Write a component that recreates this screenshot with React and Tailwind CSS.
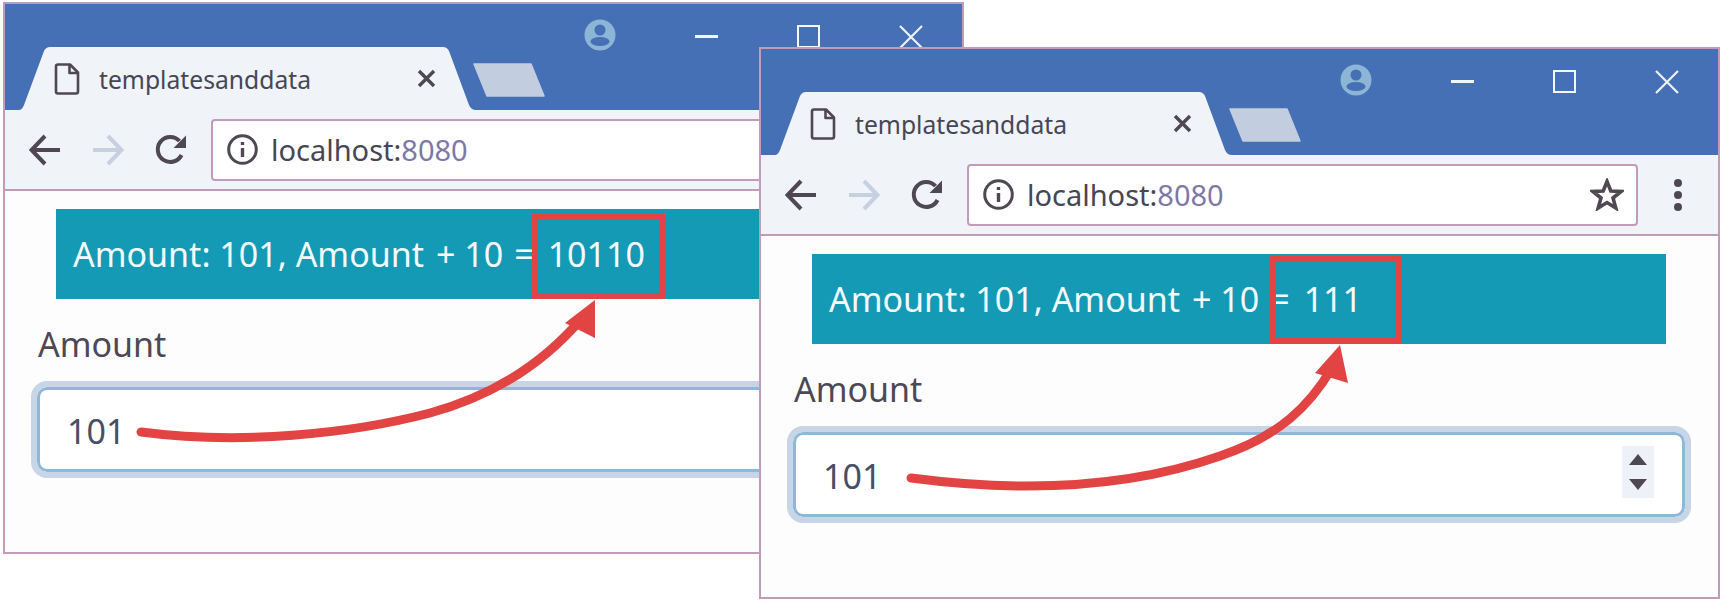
const DARK = "#4f4852";

function BrowserWindow({ className, result }) {
  return (
    <div className={`absolute flex h-[552px] w-[961px] flex-col overflow-hidden border-2 border-[#c29bbb] bg-[#fdfdfe] font-['Noto_Sans',sans-serif] ${className}`}>
      <div className="flex h-[106px] shrink-0 items-start bg-[#4570b5]">
        <div className="relative ml-[12px] mt-[43px] flex h-[63px] w-[459px] shrink-0 items-center">
          <svg className="absolute inset-0" width="459" height="63" viewBox="0 0 459 63">
            <path d="M2 63 Q5 63 7 58 L27 4 Q29 0 33 0 L426 0 Q430 0 432 4 L452 58 Q454 63 459 63 Z" fill="#f0f3f8" />
          </svg>
          <svg className="relative ml-[37px] shrink-0" width="26" height="32" viewBox="0 0 26 32" fill="none" stroke={DARK} strokeWidth="2.6" strokeLinejoin="round">
            <path d="M2 3.5 Q2 1.5 4 1.5 L16 1.5 L24 9.5 L24 28.5 Q24 30.5 22 30.5 L4 30.5 Q2 30.5 2 28.5 Z" />
            <path d="M15.5 1.5 L15.5 10 L24 10" />
          </svg>
          <span className="relative ml-[19px] mt-[2px] text-[24.7px] leading-[32px] text-[#474655]">templatesanddata</span>
          <svg className="relative ml-[106px] shrink-0" width="19" height="19" viewBox="0 0 19 19" stroke={DARK} strokeWidth="3.4">
            <path d="M2 2 L17 17 M17 2 L2 17" />
          </svg>
        </div>
        <svg className="ml-[-4px] mt-[59px] shrink-0" width="73" height="34" viewBox="0 0 73 34">
          <path d="M2 1 L59 1 L72 33 L15 33 Z" fill="#c3cde0" stroke="#c3cde0" strokeWidth="1.5" strokeLinejoin="round" />
        </svg>
        <svg className="ml-[39px] mt-[15px] shrink-0" width="32" height="32" viewBox="0 0 32 32">
          <circle cx="16" cy="16" r="15.5" fill="#8db6d6" />
          <circle cx="16" cy="11" r="5.5" fill="#4570b5" />
          <ellipse cx="16" cy="22.5" rx="9.5" ry="4.5" fill="#4570b5" />
        </svg>
        <div className="ml-[79px] mt-[31px] h-[3px] w-[23px] shrink-0 bg-[#f2f6fb]" />
        <div className="ml-[79px] mt-[21px] h-[23px] w-[23px] shrink-0 border-2 border-[#f5f8fc]" />
        <svg className="ml-[79px] mt-[21px] shrink-0" width="24" height="24" viewBox="0 0 24 24" stroke="#eef3f9" strokeWidth="2.2">
          <path d="M1 1 L23 23 M23 1 L1 23" />
        </svg>
      </div>

      <div className="flex h-[81px] shrink-0 items-center border-b-2 border-[#c29bbb] bg-[#f0f3f8]">
        <svg className="ml-[24px] shrink-0" width="32" height="32" viewBox="0 0 32 32" fill="none" stroke={DARK} strokeWidth="4">
          <path d="M31 16 L3 16 M16 2 L2.5 16 L16 30" />
        </svg>
        <svg className="ml-[31px] shrink-0" width="32" height="32" viewBox="0 0 32 32" fill="none" stroke="#c6d0e2" strokeWidth="4">
          <path d="M1 16 L29 16 M16 2 L29.5 16 L16 30" />
        </svg>
        <svg className="ml-[31px] shrink-0" width="32" height="32" viewBox="0 0 32 32" fill="none">
          <path d="M26.5 21 A12.5 12.5 0 1 1 24.5 7" stroke={DARK} strokeWidth="4" />
          <path d="M31 1.5 L31 14 L18.5 14 Z" fill={DARK} />
        </svg>
        <div className="ml-[24px] flex h-[62px] w-[671px] shrink-0 items-center rounded-[4px] border-2 border-[#c29bbb] bg-white">
          <svg className="ml-[14px] shrink-0" width="31" height="31" viewBox="0 0 31 31" fill="none" stroke={DARK}>
            <circle cx="15.5" cy="15.5" r="13.8" strokeWidth="3" />
            <path d="M15.5 14 L15.5 23" strokeWidth="3.4" />
            <path d="M15.5 8 L15.5 11" strokeWidth="3.4" />
          </svg>
          <span className="ml-[13px] text-[29px] leading-[34px] text-[#474655]">
            localhost:<span className="text-[#7d78a6]">8080</span>
          </span>
          <svg className="ml-auto mr-[12px] shrink-0" width="34" height="33" viewBox="0 0 34 33" fill="none" stroke={DARK} strokeWidth="3.6" strokeLinejoin="miter">
            <path d="M17 3.5 L20.8 13 L31 13.5 L23 20 L25.8 30 L17 24.5 L8.2 30 L11 20 L3 13.5 L13.2 13 Z" />
          </svg>
        </div>
        <div className="ml-[36px] flex w-[8px] shrink-0 flex-col gap-[4px]">
          <div className="h-[8px] w-[8px] rounded-full bg-[#4f4852]" />
          <div className="h-[8px] w-[8px] rounded-full bg-[#4f4852]" />
          <div className="h-[8px] w-[8px] rounded-full bg-[#4f4852]" />
        </div>
      </div>

      <div className="flex flex-col pl-[32px] pt-[18px]">
        <div className="ml-[19px] flex h-[90px] w-[854px] items-center whitespace-pre bg-[#149ab4] pl-[17px] text-[34px] leading-[40px] text-[#f4fafc]">
          <span>Amount: 101, Amount</span>
          <span className="ml-[12px]">+ 10</span>
          <span className="ml-[11px]">=</span>
          <span className="ml-[14px]">{result}</span>
        </div>
        <div className="ml-[1px] mt-[25px] text-[34px] leading-[40px] text-[#4d4855]">Amount</div>
        <div className="mt-[23px] flex h-[85px] w-[892px] items-center rounded-[10px] border-[3px] border-[#8cb8da] bg-white pl-[27px] pr-[28px] outline-[6px] outline-[#c8d5e6]">
          <span className="mt-[2px] text-[34px] leading-[40px] text-[#474f66]">101</span>
          <div className="mb-[6px] ml-auto flex h-[52px] w-[32px] shrink-0 items-center justify-center bg-[#eef1f7]">
            <svg width="18" height="36" viewBox="0 0 18 36" fill="#4f4852">
              <path d="M9 0 L18 11 L0 11 Z" />
              <path d="M0 25 L18 25 L9 36 Z" />
            </svg>
          </div>
        </div>
      </div>
    </div>
  );
}

function Arrow({ className, width, height, viewBox, curve, head }) {
  return (
    <svg className={`absolute ${className}`} width={width} height={height} viewBox={viewBox} fill="none">
      <path d={curve} stroke="#e24444" strokeWidth="9" strokeLinecap="round" />
      <path d={head} fill="#e24444" />
    </svg>
  );
}

export default function App() {
  return (
    <div className="relative h-[603px] w-[1725px] overflow-hidden bg-white">
      <BrowserWindow className="left-[3px] top-[2px]" result="10110" />
      <div className="absolute left-[532px] top-[213px] h-[86px] w-[133px] border-[6px] border-[#e24444]" />
      <Arrow
        className="left-0 top-0"
        width="963"
        height="603"
        viewBox="0 0 963 603"
        curve="M141 432 C 240 445, 350 434, 430 413 C 510 391, 555 350, 582 318"
        head="M595 300 L595 338 L565 323 Z"
      />
      <BrowserWindow className="left-[759px] top-[47px]" result="111" />
      <div className="absolute left-[1270px] top-[256px] h-[88px] w-[132px] border-[6px] border-[#e24444]" />
      <Arrow
        className="left-[760px] top-0"
        width="965"
        height="603"
        viewBox="760 0 965 603"
        curve="M911 478 C 1010 491, 1120 491, 1220 456 C 1280 436, 1310 405, 1332 368"
        head="M1340 345 L1348 383 L1315 373 Z"
      />
    </div>
  );
}
